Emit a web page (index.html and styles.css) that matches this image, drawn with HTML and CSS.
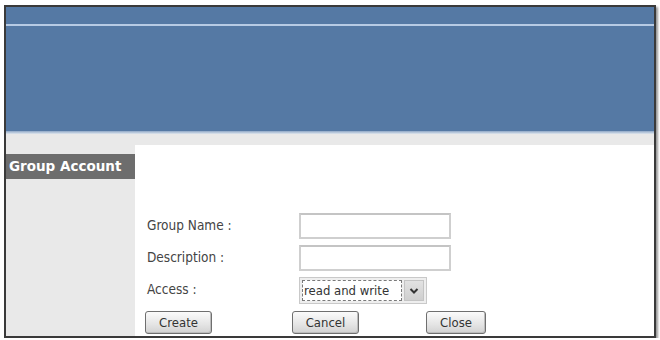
FILE: index.html
```html
<!DOCTYPE html>
<html>
<head>
<meta charset="utf-8">
<link rel="stylesheet" href="styles.css">
</head>
<body>
<div class="frame">
  <div class="header">
    <div class="header-top"></div>
    <div class="header-line"></div>
  </div>
  <div class="header-edge"></div>
  <div class="body">
    <div class="sidebar">
      <div class="side-title">Group Account</div>
    </div>
    <div class="main">
      <div class="form">
        <label class="lbl">Group Name :</label>
        <div class="field"><div class="input"></div></div>
        <label class="lbl">Description :</label>
        <div class="field"><div class="input"></div></div>
        <label class="lbl">Access :</label>
        <div class="field">
          <div class="select">
            <span class="sel-text">read and write</span>
            <span class="sel-btn">
              <svg width="10" height="8" viewBox="0 0 10 8"><path d="M1.5 2 L5 5.5 L8.5 2" fill="none" stroke="#333" stroke-width="2"/></svg>
            </span>
          </div>
        </div>
      </div>
      <div class="buttons">
        <button class="btn btn-create">Create</button>
        <button class="btn btn-cancel">Cancel</button>
        <button class="btn btn-close">Close</button>
      </div>
    </div>
  </div>
</div>
</body>
</html>
```
FILE: styles.css
```css
html, body {
  margin: 0;
  padding: 0;
  background: #ffffff;
}
body {
  font-family: "DejaVu Sans", Verdana, sans-serif;
}
.frame {
  margin: 5px 0 0 4px;
  width: 648px;
  height: 329px;
  border: 2px solid #3a3a3a;
  box-shadow: 2px 2px 2px #9a9a9a;
  display: flex;
  flex-direction: column;
  background: #e9e9e9;
  overflow: hidden;
}
.header {
  height: 124px;
  background: #5579a4;
  display: flex;
  flex-direction: column;
}
.header-top {
  height: 17px;
}
.header-line {
  height: 2px;
  background: #b7cbe4;
}
.header-edge {
  height: 3px;
  background: linear-gradient(#8ea7c6, #dfe6ee);
}
.body {
  flex: 1;
  display: flex;
}
.sidebar {
  width: 129px;
  padding-top: 20px;
}
.side-title {
  height: 25px;
  background: #6d6d6d;
  color: #ffffff;
  font-weight: bold;
  font-size: 13.5px;
  line-height: 25px;
  padding-left: 3px;
  white-space: nowrap;
  overflow: hidden;
}
.main {
  flex: 1;
  margin-top: 11px;
  background: #ffffff;
  padding: 68px 0 0 12px;
  font-family: "DejaVu Sans Condensed", "DejaVu Sans", sans-serif;
  font-size: 13.5px;
  color: #444;
}
.form {
  display: grid;
  grid-template-columns: 152px 160px;
  grid-auto-rows: 26px;
  row-gap: 6px;
}
.lbl {
  line-height: 24px;
}
.field {
  display: flex;
  align-items: center;
}
.input {
  width: 148px;
  height: 22px;
  border: 2px solid #cfcfcf;
  border-top-color: #c4c4c4;
  background: #fff;
}
.select {
  display: flex;
  align-items: stretch;
  height: 27px;
  width: 128px;
  box-sizing: border-box;
  border: 1px solid #c9c9c9;
  background: #eeeeee;
  padding: 2px;
  gap: 2px;
  margin-top: 1px;
}
.sel-text {
  flex: 1;
  background: #fff;
  border: 1px dashed #7a7a7a;
  line-height: 19px;
  padding-left: 1px;
  color: #333;
  white-space: nowrap;
  overflow: hidden;
  font-size: 13px;
}
.sel-btn {
  width: 18px;
  background: linear-gradient(#e2e2e2, #cfcfcf);
  border: 1px solid #c4c4c4;
  display: flex;
  align-items: center;
  justify-content: center;
}
.buttons {
  display: flex;
  margin-top: 8px;
  margin-left: -2px;
}
.btn {
  height: 23px;
  padding: 0;
  border: 1px solid #6f6f6f;
  border-radius: 3px;
  background: linear-gradient(#fbfbfb, #e4e4e4 60%, #d2d2d2);
  box-shadow: inset -1px -1px 0 #bcbcbc;
  font-family: "DejaVu Sans Condensed", "DejaVu Sans", sans-serif;
  font-size: 13px;
  color: #333;
}
.btn-create { width: 67px; }
.btn-cancel { width: 67px; margin-left: 80px; }
.btn-close { width: 60px; margin-left: 67px; }
```
